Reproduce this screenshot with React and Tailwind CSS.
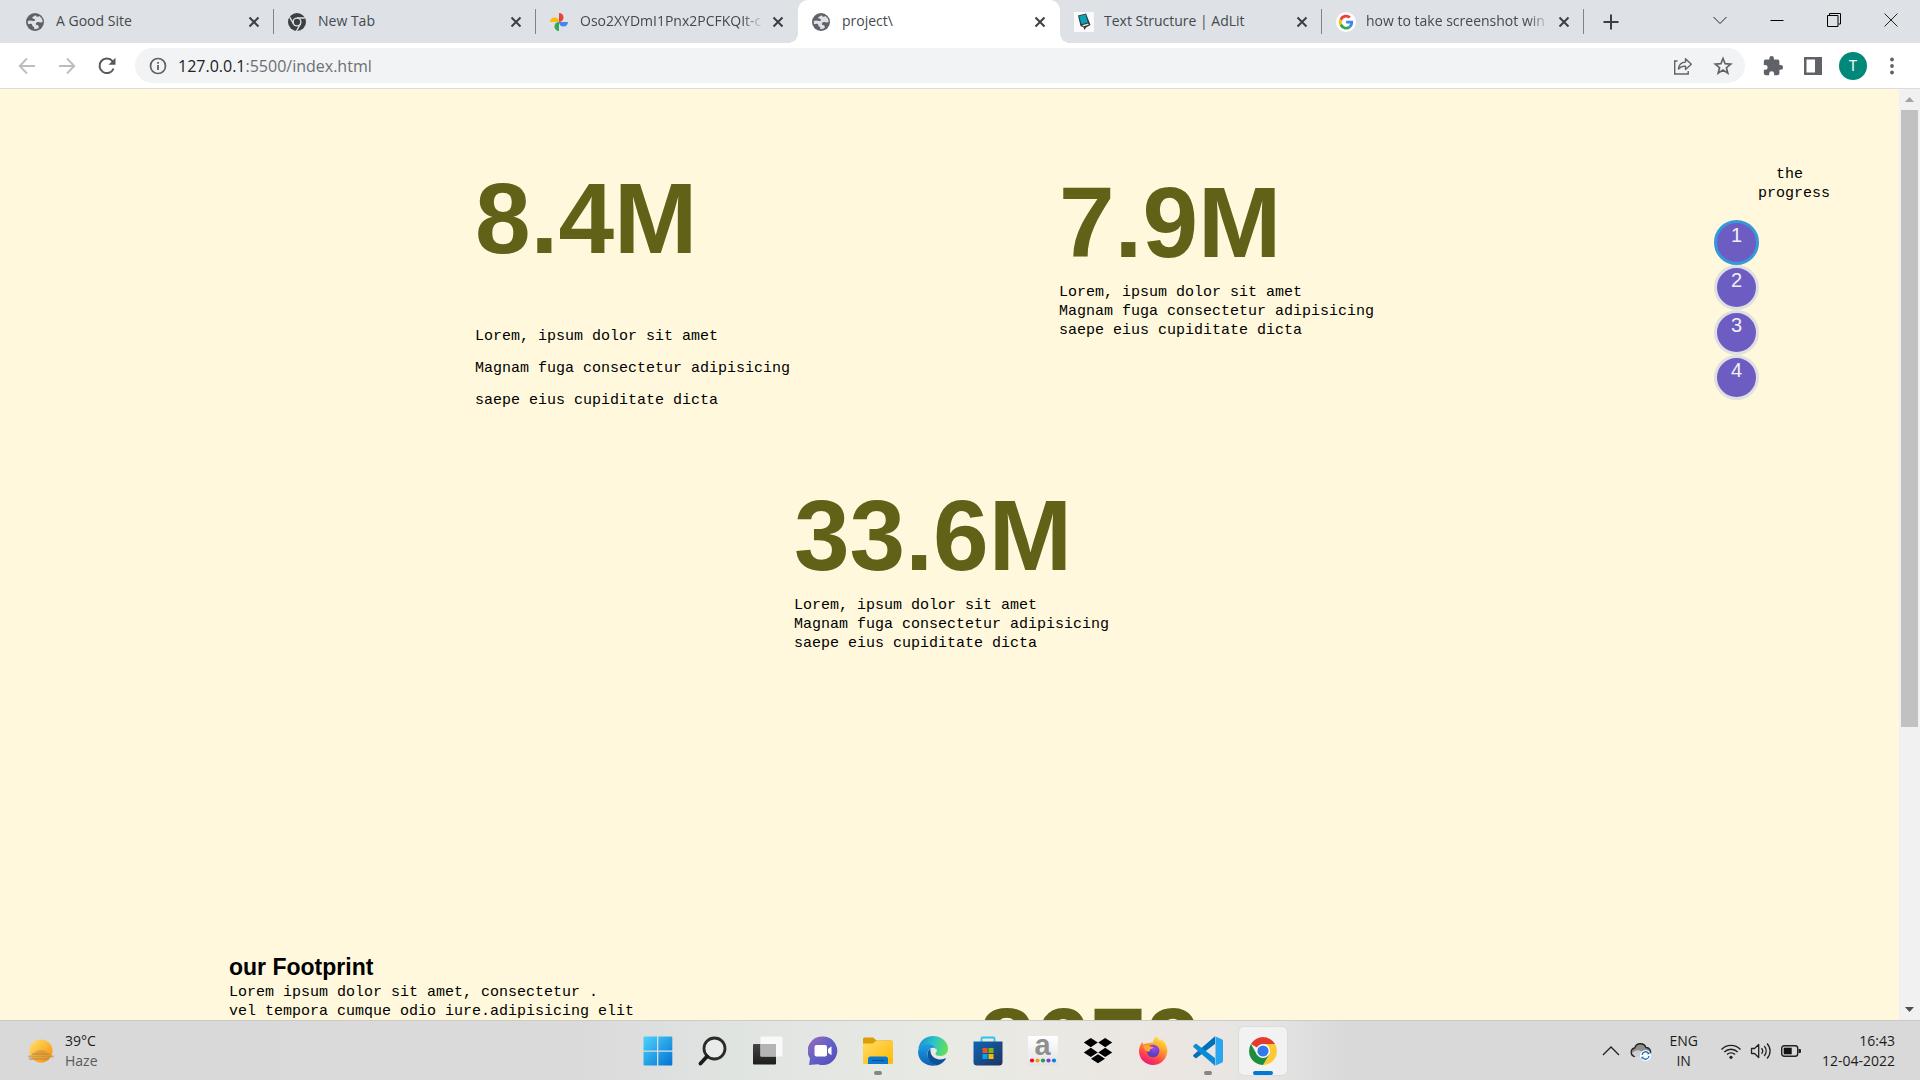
import React from "react";

const UI = "font-['Open_Sans','Noto_Sans',sans-serif]";
const MONO = "font-['Liberation_Mono',monospace] text-[15px] text-black";

/* ---------- favicons ---------- */

function Globe() {
  return (
    <svg viewBox="0 0 18 18" className="size-[18px]" aria-hidden="true">
      <circle cx="9" cy="9" r="9" fill="#5f6368" />
      <path
        fill="#dee1e6"
        d="M10.2 1.9c-1.6.5-2.3 1.6-3.2 1.9-.9.4-1 1.300-.4 1.800.6.5 1.700.1 2.300.8.5.7-.1 1.300-.9 1.500-1.200.2-2.400-.3-3.600-.3-.9 0-1.800.2-2.400.5 0-.4.1-.9.2-1.300C1.900 8 1.800 8.500 1.800 9c0 .8.1 1.500.4 2.200.8-.4 2.100-.8 3.100-.4 1.100.5.8 1.800 1.700 2.600.6.5 1.500.7 1.400 1.500 0 .5-.4.9-.6 1.200 2.200.3 3.800-.4 5.200-1.500-.5-.7-.2-1.500-.7-2-.6-.6-1.800-.3-2.300-1.100-.5-.9.2-1.800 1-2.200 1.300-.6 2.700.2 4 .2.7 0 1.200-.2 1.700-.5-.1-2.500-1.400-4.700-3.400-6-.4.6-1 .9-1.700.8-.8-.1-1.500-.5-2-1.100z"
      />
    </svg>
  );
}

function ChromeMono() {
  return (
    <svg viewBox="0 0 18 18" className="size-[18px]" aria-hidden="true">
      <circle cx="9" cy="9" r="9" fill="#3c4043" />
      <circle cx="9" cy="9" r="4.600" fill="#dee1e6" />
      <circle cx="9" cy="9" r="3.200" fill="#3c4043" />
      <path d="M9 5h7.800M5.600 11 1.700 4.200M12.400 11l-3.900 7" stroke="#dee1e6" strokeWidth="1.400" fill="none" />
    </svg>
  );
}

function Photos() {
  return (
    <svg viewBox="0 0 18 18" className="size-[18px]" aria-hidden="true">
      <path d="M9 0a4.500 4.500 0 0 1 0 9z" fill="#ea4335" />
      <path d="M18 9a4.500 4.500 0 0 1-9 0z" fill="#4285f4" />
      <path d="M9 18a4.500 4.500 0 0 1 0-9z" fill="#34a853" />
      <path d="M0 9a4.500 4.500 0 0 1 9 0z" fill="#fbbc04" />
    </svg>
  );
}

function AdLit() {
  return (
    <svg viewBox="0 0 20 20" className="size-5" aria-hidden="true">
      <rect width="20" height="20" fill="#fafafa" />
      <path d="M4 3.500 12 1.500 16.500 13 12 15.500l-1.500 2.500-.8-2.500-3.200-1.500z" fill="#333" />
      <path d="M5 4.200 11.500 2.300 13.800 10.500 7.500 12.300z" fill="#06a3b7" />
      <path d="M8 13.200l6-1.700.9 1.200-5.500 1.800z" fill="#ddd" />
    </svg>
  );
}

function GoogleG() {
  return (
    <svg viewBox="0 0 20 20" className="size-5" aria-hidden="true">
      <circle cx="10" cy="10" r="10" fill="#fff" />
      <path d="M17.100 8.700H10.100v2.900h4a3.500 3.500 0 0 1-1.500 2.300l2.300 1.800c1.500-1.400 2.600-3.800 2.200-7z" fill="#4285f4" />
      <path d="M14.900 15.700l-2.300-1.800a4.400 4.400 0 0 1-6.600-2.300l-2.400 1.800a7.200 7.200 0 0 0 11.300 2.300z" fill="#34a853" />
      <path d="M6 11.600a4.500 4.500 0 0 1 0-3L3.600 6.700a7.300 7.300 0 0 0 0 6.700z" fill="#fbbc05" />
      <path d="M6 8.600a4.300 4.300 0 0 1 6.800-2.100l2.100-2a7.200 7.200 0 0 0-11.300 2.200z" fill="#ea4335" />
    </svg>
  );
}

/* ---------- browser chrome ---------- */

const TABS = [
  { title: "A Good Site", icon: <Globe /> },
  { title: "New Tab", icon: <ChromeMono /> },
  { title: "Oso2XYDmI1Pnx2PCFKQIt-c", icon: <Photos />, fade: true, noDivider: true },
  { title: "project\\", icon: <Globe />, active: true, noDivider: true },
  { title: "Text Structure | AdLit", icon: <AdLit /> },
  { title: "how to take screenshot win", icon: <GoogleG />, fade: true },
];

function Tab({ title, icon, active, fade, noDivider }) {
  return (
    <div
      className={
        "relative flex h-[43px] min-w-0 flex-[0_1_262px] items-center pl-[14px] pr-[14px] " +
        (active ? "rounded-t-[10px] bg-white" : "")
      }
    >
      {active && (
        <>
          <span className="absolute bottom-0 -left-[10px] size-[10px] bg-[radial-gradient(circle_at_0_0,transparent_10px,#fff_10px)]" />
          <span className="absolute -right-[10px] bottom-0 size-[10px] bg-[radial-gradient(circle_at_100%_0,transparent_10px,#fff_10px)]" />
        </>
      )}
      <span className="flex w-5 shrink-0">{icon}</span>
      <button
        className={
          "ml-[10px] min-w-0 flex-1 overflow-hidden pb-[2px] text-left text-[14px] leading-5 whitespace-nowrap text-[#45494d] " +
          (fade ? "[mask-image:linear-gradient(to_right,#000_88%,transparent)]" : "")
        }
      >
        {title}
      </button>
      <button aria-label={"Close " + title} className="ml-1 flex size-5 shrink-0 -mr-[4px] items-center justify-center">
        <svg viewBox="0 0 12 12" className="size-3" aria-hidden="true">
          <path d="M1.500 1.500l9 9M10.500 1.500l-9 9" stroke="#3c4043" strokeWidth="2" />
        </svg>
      </button>
      {!noDivider && <span className="absolute top-[9px] right-0 h-[25px] w-px bg-[#808489]" />}
    </div>
  );
}

function TabStrip() {
  return (
    <div className="flex h-[43px] shrink-0 items-center bg-[#dee1e6] pr-px pl-3">
      {TABS.map((t) => (
        <Tab key={t.title} {...t} />
      ))}
      <button aria-label="New tab" className="ml-4 flex size-[22px] items-center justify-center">
        <svg viewBox="0 0 16 16" className="size-4" aria-hidden="true">
          <path d="M8 .500v15M.500 8h15" stroke="#3c4043" strokeWidth="2" />
        </svg>
      </button>
      <div className="ml-auto flex h-9 items-center pb-1">
        <button aria-label="Search tabs" className="flex w-[57px] justify-center">
          <svg viewBox="0 0 14 14" className="size-[14px]" fill="none" stroke="#222" aria-hidden="true">
            <path d="M.500 4l6.500 6.500L13.500 4" />
          </svg>
        </button>
        <button aria-label="Minimize" className="flex w-[57px] justify-center">
          <svg viewBox="0 0 14 14" className="size-[14px]" aria-hidden="true">
            <path d="M.500 7.500h13" stroke="#000" />
          </svg>
        </button>
        <button aria-label="Restore" className="flex w-[57px] justify-center">
          <svg viewBox="0 0 14 14" className="size-[14px]" fill="none" stroke="#000" aria-hidden="true">
            <path d="M.500 2.500h10.500v11H.500zM2.500 2.500v-2h11v10.500h-2" />
          </svg>
        </button>
        <button aria-label="Close window" className="flex w-[57px] justify-center">
          <svg viewBox="0 0 14 14" className="size-[14px]" fill="none" stroke="#222" aria-hidden="true">
            <path d="M.500.500l13 13M13.500.500l-13 13" />
          </svg>
        </button>
      </div>
    </div>
  );
}

function Toolbar() {
  return (
    <div className="flex h-[46px] shrink-0 items-center border-b border-[#dadce0] bg-white pr-[19px] pl-[17px]">
      <button aria-label="Back" className="flex size-5 items-center justify-center">
        <svg viewBox="0 0 18 18" className="size-[18px]" fill="none" stroke="#babcbe" strokeWidth="1.800" aria-hidden="true">
          <path d="M17 9H2M9 1.500L1.700 9 9 16.500" />
        </svg>
      </button>
      <button aria-label="Forward" className="ml-5 flex size-5 items-center justify-center">
        <svg viewBox="0 0 18 18" className="size-[18px]" fill="none" stroke="#babcbe" strokeWidth="1.800" aria-hidden="true">
          <path d="M1 9h15M9 1.500L16.300 9 9 16.500" />
        </svg>
      </button>
      <button aria-label="Reload" className="ml-5 flex size-5 items-center justify-center">
        <svg viewBox="0 0 18 18" className="size-[18px]" fill="none" stroke="#55595e" strokeWidth="2" aria-hidden="true">
          <path d="M15.600 11.500A7.300 7.300 0 1 1 14.500 4.200l1 1.200" />
          <path d="M17.500.800v7h-7z" fill="#55595e" stroke="none" />
        </svg>
      </button>
      <div className="ml-[18px] flex h-[35px] min-w-0 flex-1 items-center rounded-full bg-[#f1f3f4] pr-3 pl-[14px]">
        <svg viewBox="0 0 18 18" className="size-[18px] shrink-0" aria-hidden="true">
          <circle cx="9" cy="9" r="7.500" fill="none" stroke="#5f6368" strokeWidth="1.700" />
          <path d="M9 8v5M9 5v1.800" stroke="#5f6368" strokeWidth="1.800" />
        </svg>
        <div className="ml-[11px] flex-1 text-[16px] leading-6 text-[#6b6f74]" role="textbox" aria-label="Address">
          <span className="text-[#202124]">127.0.0.1</span>:5500/index.html
        </div>
        <button aria-label="Share">
          <svg viewBox="0 0 20 20" className="size-5" fill="none" stroke="#5f6368" strokeWidth="1.400" aria-hidden="true">
            <path d="M4.500 5H1.700v13h13.500v-3" />
            <path d="M5.500 13c.3-4.500 3-6.700 7-6.900V2.700l5.800 5.500-5.800 5.300v-3.400c-3-.1-5.200.6-7 2.900z" strokeLinejoin="round" />
          </svg>
        </button>
        <button aria-label="Bookmark" className="ml-5">
          <svg viewBox="0 0 20 20" className="size-5" fill="none" stroke="#5f6368" strokeWidth="1.700" aria-hidden="true">
            <path d="M10 2.500l2.100 5.200 5.600.4-4.300 3.600 1.400 5.400-4.800-3-4.800 3 1.400-5.400L2.300 8.100l5.600-.4z" />
          </svg>
        </button>
      </div>
      <button aria-label="Extensions" className="ml-[17px]">
        <svg viewBox="0 0 24 24" className="size-[22px]" fill="#5f6368" aria-hidden="true">
          <path d="M20.500 11H19V7c0-1.100-.9-2-2-2h-4V3.500a2.500 2.500 0 0 0-5 0V5H4c-1.100 0-2 .9-2 2v3.800h1.500a2.700 2.700 0 0 1 0 5.400H2V20c0 1.100.9 2 2 2h3.800v-1.500a2.700 2.700 0 0 1 5.400 0V22H17c1.100 0 2-.9 2-2v-4h1.500a2.500 2.500 0 0 0 0-5z" />
        </svg>
      </button>
      <button aria-label="Side panel" className="ml-[19px]">
        <svg viewBox="0 0 20 20" className="size-5" aria-hidden="true">
          <path d="M1 1h18v18H1zM3.500 3.500v13H12v-13z" fill="#5f6368" fillRule="evenodd" />
        </svg>
      </button>
      <button
        aria-label="Profile"
        className="ml-4 size-7 rounded-full bg-[#00897b] font-['Roboto',sans-serif] text-[14px] leading-7 text-white"
      >
        T
      </button>
      <button aria-label="Menu" className="ml-[16px]">
        <svg viewBox="0 0 18 18" className="size-[18px]" fill="#5f6368" aria-hidden="true">
          <circle cx="9" cy="2.500" r="1.900" />
          <circle cx="9" cy="9" r="1.900" />
          <circle cx="9" cy="15.500" r="1.900" />
        </svg>
      </button>
    </div>
  );
}

/* ---------- page ---------- */

const LOREM = ["Lorem, ipsum dolor sit amet", "Magnam fuga consectetur adipisicing", "saepe eius cupiditate dicta"];

function Figure({ children }) {
  return (
    <h2 className="font-['Liberation_Sans',Arial,sans-serif] text-[100px] leading-[100px] font-bold text-[#616118]">
      {children}
    </h2>
  );
}

function Lines({ lines, className }) {
  return (
    <p className={MONO + " whitespace-nowrap " + className}>
      {lines.map((l) => (
        <span key={l} className="block">
          {l}
        </span>
      ))}
    </p>
  );
}

function Progress() {
  return (
    <nav aria-label="the progress" className="pt-[76px]">
      <p className={MONO + " ml-[44px] w-[72px] text-center leading-[19px]"}>
        the&nbsp;
        <br />
        progress
      </p>
      <ol className="mt-[17px]">
        {[1, 2, 3, 4].map((n) => (
          <li key={n}>
            <button
              className={
                "flex size-[45px] justify-center rounded-full border-[3px] bg-[#6d5dc3] font-['Liberation_Sans',Arial,sans-serif] text-[20px] leading-6 text-[#f0f0f0] " +
                (n === 1 ? "border-[#3498db]" : "border-[#e0e0e0]")
              }
            >
              {n}
            </button>
          </li>
        ))}
      </ol>
    </nav>
  );
}

function Page() {
  return (
    <main className="min-w-0 flex-1 overflow-hidden bg-[#fff8dc]">
      <section className="grid grid-cols-[475fr_584fr_655fr_185fr]">
        <div className="col-start-2 pt-[79px]">
          <Figure>8.4M</Figure>
          <Lines lines={LOREM} className="mt-[53px] leading-8" />
        </div>
        <div className="pt-[83px]">
          <Figure>7.9M</Figure>
          <Lines lines={LOREM} className="mt-[11px] leading-[19px]" />
        </div>
        <Progress />
      </section>
      <section className="mt-[68px] grid grid-cols-[794fr_1105fr]">
        <div className="col-start-2">
          <Figure>33.6M</Figure>
          <Lines lines={LOREM} className="mt-[11px] leading-[19px]" />
        </div>
      </section>
      <section className="mt-[302px] grid grid-cols-[229fr_750fr_920fr]">
        <div className="col-start-2">
          <h3 className="font-['Liberation_Sans',Arial,sans-serif] text-[23px] leading-6 font-bold text-black">our Footprint</h3>
          <Lines
            lines={["Lorem ipsum dolor sit amet, consectetur .", "vel tempora cumque odio iure.adipisicing elit"]}
            className="mt-1 leading-[19px]"
          />
        </div>
        <div className="pt-[38px]">
          <Figure>8679</Figure>
        </div>
      </section>
    </main>
  );
}

function ScrollBar() {
  return (
    <div className="flex w-[21px] shrink-0 flex-col items-center bg-[#f1f1f1]" aria-hidden="true">
      <span className="flex h-[21px] items-center">
        <svg viewBox="0 0 9 5" className="h-[5px] w-[9px]">
          <path d="M0 5L4.500 0 9 5z" fill="#a3a3a3" />
        </svg>
      </span>
      <span className="w-[17px] flex-[617] bg-[#c1c1c1]" />
      <span className="flex-[272]" />
      <span className="flex h-[21px] items-center">
        <svg viewBox="0 0 9 5" className="h-[5px] w-[9px]">
          <path d="M0 0L4.500 5 9 0z" fill="#505050" />
        </svg>
      </span>
    </div>
  );
}

/* ---------- taskbar ---------- */

function Icon({ children }) {
  return (
    <svg viewBox="0 0 30 30" className="size-[30px]" aria-hidden="true">
      {children}
    </svg>
  );
}

const APPS = [
  {
    name: "Start",
    icon: (
      <Icon>
        <defs>
          <linearGradient id="winAll" x1="0" y1="0" x2="30" y2="30" gradientUnits="userSpaceOnUse">
            <stop offset="0" stopColor="#50d4ff" />
            <stop offset="1" stopColor="#0070d0" />
          </linearGradient>
        </defs>
        <path fill="url(#winAll)" d="M1.500.500H14v14H.500v-13a1 1 0 0 1 1-1zM15.300.500h13a1 1 0 0 1 1 1v13h-14zM.500 15.700H14v13.800H1.500a1 1 0 0 1-1-1zM15.300 15.700h14v12.800a1 1 0 0 1-1 1h-13z" />
      </Icon>
    ),
  },
  {
    name: "Search",
    icon: (
      <Icon>
        <circle cx="16.500" cy="12.500" r="10.500" fill="#f4f4f4" fillOpacity=".5" stroke="#2b2b2b" strokeWidth="2.800" />
        <path d="M9 20.500L2.500 27.500" stroke="#1b1b1b" strokeWidth="3.800" strokeLinecap="round" />
      </Icon>
    ),
  },
  {
    name: "Task view",
    icon: (
      <Icon>
        <defs>
          <linearGradient id="tv" x1="0" y1="0" x2="0" y2="1">
            <stop offset="0" stopColor="#454545" />
            <stop offset="1" stopColor="#1d1d1d" />
          </linearGradient>
        </defs>
        <rect x="0" y="8" width="23" height="20.500" rx="1" fill="url(#tv)" />
        <rect x="7.500" y=".500" width="22" height="20" rx="1" fill="#fbfbfb" fillOpacity=".93" />
        <rect x="7.500" y="8" width="15.500" height="12.500" fill="#b4b4b4" />
      </Icon>
    ),
  },
  {
    name: "Chat",
    icon: (
      <Icon>
        <defs>
          <linearGradient id="chat" x1="0" y1="0" x2="1" y2="1">
            <stop offset="0" stopColor="#a36bb0" />
            <stop offset=".4" stopColor="#6b63c8" />
            <stop offset="1" stopColor="#4d4fb8" />
          </linearGradient>
        </defs>
        <path d="M15 .500a14.300 14.300 0 1 1-5 27.700L1 29l1-6.500A14.300 14.300 0 0 1 15 .500z" fill="url(#chat)" />
        <rect x="6.500" y="9" width="12.500" height="11.500" rx="2" fill="#fff" />
        <path d="M20 13l3.500-2.700v9L20 16.700z" fill="#fff" />
      </Icon>
    ),
  },
  {
    name: "File Explorer",
    open: true,
    icon: (
      <Icon>
        <defs>
          <linearGradient id="fold" x1="0" y1="0" x2="1" y2="1">
            <stop offset="0" stopColor="#ffdc66" />
            <stop offset="1" stopColor="#ffb900" />
          </linearGradient>
        </defs>
        <path d="M0 3a1.500 1.500 0 0 1 1.500-1.500h8.700l3.300 3H28A2 2 0 0 1 30 6.500V10H0z" fill="#de9c0a" />
        <path d="M0 7.500h10l3-2.700h15.500A1.500 1.500 0 0 1 30 6.300v20.200a1.500 1.500 0 0 1-1.500 1.500h-27A1.500 1.500 0 0 1 0 26.500z" fill="url(#fold)" />
        <path d="M5 28v-5a2.500 2.500 0 0 1 2.500-2.500h15A2.500 2.500 0 0 1 25 23v5z" fill="#0b78d0" />
        <path d="M9 24.500h12" stroke="#0a4f94" strokeWidth="1.200" />
      </Icon>
    ),
  },
  {
    name: "Microsoft Edge",
    icon: (
      <Icon>
        <defs>
          <linearGradient id="edgeTop" x1="0" y1=".3" x2="1" y2=".5">
            <stop offset="0" stopColor="#1b8fd8" />
            <stop offset=".5" stopColor="#2bc3c8" />
            <stop offset="1" stopColor="#62e252" />
          </linearGradient>
          <linearGradient id="edgeL" x1="0" y1="0" x2="0" y2="1">
            <stop offset="0" stopColor="#1c9fe0" />
            <stop offset="1" stopColor="#0f5fb8" />
          </linearGradient>
        </defs>
        <path d="M.300 13C1.500 5 7.500 0 15 0c8.500 0 15 6 15 12.500 0 4.800-3.500 7.500-7.500 7.500-3.200 0-5-1-5-2.300 0-1 1.300-1.400 1.300-3.200 0-2.700-2.600-5-6.300-5C7 9.500 2 12 .300 13z" fill="url(#edgeTop)" />
        <path d="M.100 15C1 11 5 8.300 9.800 8.300c4.700 0 8 2.500 8.800 5.200-1-1.300-2.500-2-4-1.800-4.300.6-6 5-4.800 9 1.300 4.400 5 7.500 9.700 8.600C9 31.800-.800 24.500.100 15z" fill="url(#edgeL)" />
        <path d="M12.500 12.800c-2.500 1.300-3.500 4.500-2.700 8C11 26 15 29 19.500 29.200c3.800-1 6.500-3.200 8.300-6.100.3-.7-.2-1-.9-.7-7.500 3.100-15.400-1.200-14.400-9.600z" fill="#0c5296" />
      </Icon>
    ),
  },
  {
    name: "Microsoft Store",
    icon: (
      <Icon>
        <defs>
          <linearGradient id="store" x1="0" y1="0" x2="1" y2="1">
            <stop offset="0" stopColor="#0f66b5" />
            <stop offset="1" stopColor="#20335f" />
          </linearGradient>
        </defs>
        <path d="M8.500 6V2.500a1 1 0 0 1 1-1h11a1 1 0 0 1 1 1V6" fill="none" stroke="#2cc4ee" strokeWidth="1.800" />
        <path d="M.500 5.500h29V26a3.500 3.500 0 0 1-3.500 3.500H4A3.500 3.500 0 0 1 .500 26z" fill="url(#store)" />
        <path d="M9.500 12h5v5h-5z" fill="#f25022" />
        <path d="M15.500 12h5v5h-5z" fill="#7fba00" />
        <path d="M9.500 18h5v5h-5z" fill="#00a4ef" />
        <path d="M15.500 18h5v5h-5z" fill="#ffb900" />
      </Icon>
    ),
  },
  {
    name: "Amazon",
    icon: (
      <span className="flex size-[30px] flex-col items-center bg-linear-to-b from-white to-[#e2e2e2]">
        <span className="h-[22px] font-['Liberation_Sans',Arial,sans-serif] text-[29px] leading-[18px] font-bold text-[#8f8f8f]">a</span>
        <svg viewBox="0 0 28 5" className="h-[5px] w-7" aria-hidden="true">
          <circle cx="3" cy="2.500" r="2.100" fill="#e60f1e" />
          <circle cx="8.500" cy="2.500" r="2.100" fill="#f59a1b" />
          <circle cx="14" cy="2.500" r="2.100" fill="#1fa050" />
          <circle cx="19.500" cy="2.500" r="2.100" fill="#8a35d4" />
          <circle cx="25" cy="2.500" r="2.100" fill="#0b84e0" />
        </svg>
      </span>
    ),
  },
  {
    name: "Dropbox",
    icon: (
      <Icon>
        <path d="M7.800 2l7 4.600-7 4.600-7-4.600zM22.200 2l7 4.600-7 4.600-7-4.600zM7.800 11.800l7 4.600-7 4.600-7-4.600zM22.200 11.800l7 4.600-7 4.600-7-4.600zM15 18.300l7 4.400-7 4.600-7-4.600z" fill="#000" />
      </Icon>
    ),
  },
  {
    name: "Firefox",
    icon: (
      <Icon>
        <defs>
          <linearGradient id="ff" x1=".8" y1="0" x2=".3" y2="1">
            <stop offset="0" stopColor="#fff044" />
            <stop offset=".4" stopColor="#ff9a2b" />
            <stop offset=".75" stopColor="#ff3f4c" />
            <stop offset="1" stopColor="#e61587" />
          </linearGradient>
          <radialGradient id="ffg" cx=".6" cy=".3">
            <stop offset="0" stopColor="#a04bea" />
            <stop offset="1" stopColor="#5b3fc0" />
          </radialGradient>
        </defs>
        <path d="M18 .500c2 1 3.300 2.700 4.200 4.700l1-2.200c3.600 2.800 6.300 7 6.100 12C29 23 22.800 29 15 29S1 22.800 1 15.300c0-4.300 1.500-7 3.500-9.300.1 1.300.5 2 1 2.600C7.200 7.300 9 7 10.800 7.200 12.500 6.200 15 6.800 15 6.800c.5-2.300 1.200-4.600 3-6.300z" fill="url(#ff)" />
        <circle cx="15" cy="15" r="6.300" fill="url(#ffg)" />
        <path d="M5 10.500c2.500-1.800 5-1.500 7.200-.3 1.500.8 3 .4 3.200 1.300-.8 1.300-2.600 1.300-3.200 2-.5 1 .2 1.500-.8 2-2 .6-4-.4-6.400-5z" fill="#ffa436" />
      </Icon>
    ),
  },
  {
    name: "Visual Studio Code",
    open: true,
    icon: (
      <Icon>
        <path d="M.600 18.800L22 .300v7.800L3.600 21.900a1.300 1.300 0 0 1-1.700-.1L.600 20.600a1.200 1.200 0 0 1 0-1.800z" fill="#0070ba" />
        <path d="M.600 11.200L22 29.700v-7.800L3.600 8.100a1.300 1.300 0 0 0-1.700.1L.600 9.400a1.200 1.200 0 0 0 0 1.800z" fill="#0d8bd8" />
        <path d="M21.500 0l7.300 3.200a2 2 0 0 1 1.200 1.800v20a2 2 0 0 1-1.200 1.800L21.500 30c1 0 1-.700 1-1.500v-27c0-.8 0-1.500-1-1.500z" fill="#2aa5ef" />
      </Icon>
    ),
  },
  {
    name: "Google Chrome",
    active: true,
    icon: (
      <Icon>
        <path d="M15 15L2.900 8A14 14 0 0 1 27.100 8H15z" fill="#e33b2e" />
        <path d="M15 15l6 0L15 29A14 14 0 0 0 27.100 8H15z" fill="#fcc934" />
        <path d="M15 15l6.100 3.500L15 29A14 14 0 0 1 2.900 8l6 10.500z" fill="#1e8e3e" />
        <circle cx="15" cy="15" r="7" fill="#fff" />
        <circle cx="15" cy="15" r="5.600" fill="#3479ea" />
      </Icon>
    ),
  },
];

function Taskbar() {
  return (
    <footer className="grid h-[60px] shrink-0 grid-cols-[1fr_auto_1fr] items-center border-t border-[#cbcbc9] bg-[linear-gradient(to_right,#d9d9d9_0%,#dadada_30%,#e0e4e1_38%,#e9eae4_50%,#ebe6e1_61%,#e6e5e4_66%,#d9d9d9_70%,#d9d9d9_100%)] text-[14px] leading-5 text-[#1c1c1c]">
      <button className="ml-7 flex items-center justify-self-start text-left">
        <svg viewBox="0 0 28 28" className="size-7" aria-hidden="true">
          <defs>
            <linearGradient id="sun" x1="0" y1="0" x2="1" y2="1">
              <stop offset="0" stopColor="#ffe36b" />
              <stop offset="1" stopColor="#f98c06" />
            </linearGradient>
          </defs>
          <circle cx="13" cy="14" r="11.500" fill="url(#sun)" />
          <path d="M5 17h16M1 19.500h24M2 22h18" stroke="#b9894a" strokeOpacity=".6" strokeWidth="2" strokeLinecap="round" />
          <path d="M6 18a7 5 0 0 1 14 0z" fill="#c98f3c" fillOpacity=".6" />
        </svg>
        <span className="ml-[9px]">
          <span className="block">39°C</span>
          <span className="block text-[#5a5a5a]">Haze</span>
        </span>
      </button>
      <nav aria-label="Apps" className="flex gap-[7px]">
        {APPS.map((a) => (
          <button
            key={a.name}
            aria-label={a.name}
            className={
              "relative flex size-12 items-center justify-center rounded-[5px] " +
              (a.active ? "bg-[#f2f2f2] shadow-[0_0_1px_1px_#dcdcdc]" : "")
            }
          >
            {a.icon}
            {a.open && <span className="absolute bottom-0 h-1 w-2 rounded-full bg-[#868686]" />}
            {a.active && <span className="absolute bottom-0 h-1 w-5 rounded-full bg-[#0078d7]" />}
          </button>
        ))}
      </nav>
      <div className="mr-[25px] flex items-center justify-self-end">
        <button aria-label="Show hidden icons">
          <svg viewBox="0 0 18 18" className="size-[18px]" fill="none" stroke="#222" strokeWidth="1.300" aria-hidden="true">
            <path d="M1 13l8-8 8 8" />
          </svg>
        </button>
        <button aria-label="OneDrive" className="ml-[10px]">
          <svg viewBox="0 0 22 20" className="h-5 w-[22px]" aria-hidden="true">
            <path d="M5 15.500a4.300 4.300 0 0 1-.3-8.500A6 6 0 0 1 16 6.500a4.600 4.600 0 0 1 4.500 6" fill="#8f8f8f" stroke="#222" strokeWidth="1.300" />
            <path d="M2 12c3-3 7-4 10-1l-2 4.500H5z" fill="#cfcfcf" />
            <circle cx="15.500" cy="14.500" r="5.500" fill="#fff" />
            <path d="M12 14a3.600 3.600 0 0 1 6.500-1.700M19 15a3.600 3.600 0 0 1-6.500 1.700" fill="none" stroke="#1470c8" strokeWidth="1.300" />
            <path d="M19.500 10.700v2.600h-2.600zM11.500 18.300v-2.600h2.600z" fill="#1470c8" />
          </svg>
        </button>
        <button className="ml-[17px] text-center">
          <span className="block">ENG</span>
          <span className="block">IN</span>
        </button>
        <button aria-label="Network, sound and battery" className="ml-[22px] flex items-center gap-2">
          <svg viewBox="0 0 22 18" className="h-[18px] w-[22px]" fill="none" stroke="#222" strokeWidth="1.400" aria-hidden="true">
            <path d="M1.500 7.500a13 13 0 0 1 19 0M4.300 10a9.500 9.500 0 0 1 13.400 0M7 12.500a5.800 5.800 0 0 1 8 0" />
            <circle cx="11" cy="15.300" r="1.600" fill="#222" stroke="none" />
          </svg>
          <svg viewBox="0 0 22 18" className="h-[18px] w-[22px]" fill="none" stroke="#222" strokeWidth="1.300" aria-hidden="true">
            <path d="M1.500 6.500h3L8.700 2.500v13L4.500 11.500h-3z" strokeLinejoin="round" />
            <path d="M11.500 6.300a4 4 0 0 1 0 5.400M14.200 4a7.200 7.200 0 0 1 0 10M17 1.500a10.700 10.700 0 0 1 0 15" />
          </svg>
          <svg viewBox="0 0 22 18" className="h-[18px] w-[22px]" aria-hidden="true">
            <rect x="1.700" y="3.700" width="16" height="10.600" rx="2.500" fill="none" stroke="#222" strokeWidth="1.400" />
            <rect x="3.700" y="5.700" width="8" height="6.600" fill="#111" />
            <path d="M18.500 7h1.500a1 1 0 0 1 1 1v2a1 1 0 0 1-1 1h-1.500z" fill="#222" />
          </svg>
        </button>
        <button className="ml-5 text-right">
          <span className="block">16:43</span>
          <span className="block">12-04-2022</span>
        </button>
      </div>
    </footer>
  );
}

export default function App() {
  return (
    <div className={"flex h-screen flex-col overflow-hidden " + UI}>
      <TabStrip />
      <Toolbar />
      <div className="flex min-h-0 flex-1">
        <Page />
        <ScrollBar />
      </div>
      <Taskbar />
    </div>
  );
}
